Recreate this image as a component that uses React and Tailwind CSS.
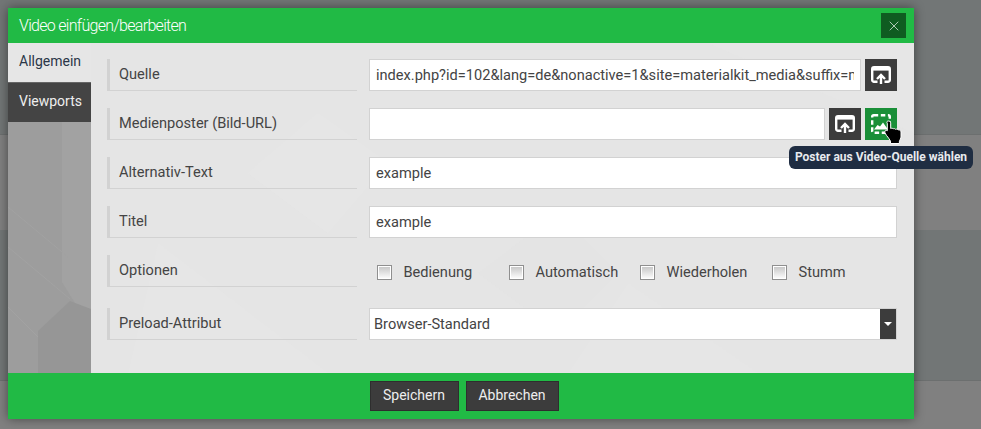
import { X } from 'lucide-react';

const fieldClass = 'flex-1 min-w-0 h-8 border border-[#d2d2d2] bg-white px-[6px] text-[14.6px] leading-[30px] text-[#444]';

function UploadIcon() {
  return (
    <svg width="20" height="18" viewBox="0 0 20 18" fill="none">
      <path d="M6.500 15.800H3a1.800 1.800 0 0 1-1.800-1.800V3A1.800 1.800 0 0 1 3 1.200h14A1.800 1.800 0 0 1 18.800 3v11a1.800 1.800 0 0 1-1.800 1.800h-3.500" stroke="#fff" strokeWidth="2.400" />
      <rect x="2" y="2" width="16" height="2.600" fill="#fff" />
      <path d="M10 18V9.500M6 13l4-4 4 4" stroke="#fff" strokeWidth="2.400" />
    </svg>
  );
}

function PosterIcon() {
  return (
    <svg width="20" height="20" viewBox="0 0 20 20" fill="none">
      <rect x="1.200" y="1.200" width="17.600" height="17.600" rx="1.500" stroke="#fff" strokeWidth="2.400" strokeDasharray="4.500 2.600" />
      <path d="M3 15.500 6.500 11l2.500 1.600L12 8.500l5 7z" fill="#fff" />
    </svg>
  );
}

function HandCursor() {
  return (
    <svg width="19" height="24" viewBox="0 0 19 24">
      <path
        d="M4.500 1c1.300 0 2.200 1 2.200 2.200v5.300c.8-.4 1.800-.3 2.400.3.800-.4 1.800-.2 2.400.5.800-.4 2-.2 2.500.6.900-.3 3 .2 3 2v4.300c0 2.300-1 3.600-1.600 5v2.300H6.500v-2.300C5.500 19 4 17.500 2.500 15.400L1 13c-1-1.700 1-3.500 2.300-2.300V3.200C2.300 2 3.200 1 4.500 1z"
        fill="#000"
        stroke="#fff"
        strokeWidth="1"
      />
    </svg>
  );
}

function Row({ label, className = 'mb-[17px]', children }) {
  return (
    <div className={`relative flex gap-3 ${className}`}>
      <div className="w-[250px] h-8 shrink-0 border-l-[3px] border-b border-[#d2d2d2] pl-[9px] text-[14.6px] leading-[31px] text-[#444]">
        {label}
      </div>
      <div className="flex-1 min-w-0 flex gap-1">{children}</div>
    </div>
  );
}

function IconButton({ green, children }) {
  return (
    <div className={`w-8 h-8 shrink-0 flex items-center justify-center ${green ? 'bg-[#1a8f38]' : 'bg-[#3c3c3c]'}`}>
      {children}
    </div>
  );
}

function Check({ label, className }) {
  return (
    <label className={`flex items-center ${className}`}>
      <span className="w-[15px] h-[15px] shrink-0 border border-[#8f8f8f] bg-gradient-to-b from-[#c4c4c4] to-white shadow-[inset_0_0_0_1px_#fff]" />
      <span className="ml-[11.500px] text-[14.6px] text-[#444]">{label}</span>
    </label>
  );
}

export default function App() {
  return (
    <div className="relative h-[429px] w-[981px] overflow-hidden bg-[#808080] font-['Roboto',sans-serif]">
      {/* page behind the overlay */}
      <div className="h-[135px] bg-[#727676] border-b border-[#6c6f6f]" />
      <div className="h-[95px]" />
      <div className="h-[151px] bg-[#727676] border-b border-[#6c6f6f]" />

      <div className="absolute left-2 top-2 w-[906px] h-[411px] flex flex-col bg-[#e5e5e5] shadow-[0_0_10px_rgba(0,0,0,0.45)]">
        <div className="h-[35px] shrink-0 flex items-center justify-between bg-[#21ba45] pl-[11px] pr-2">
          <span className="text-[16px] font-light tracking-[-0.7px] text-white">Video einfügen/bearbeiten</span>
          <div className="w-[25px] h-[25px] flex items-center justify-center bg-[#0f5c21]">
            <X size={16} strokeWidth={1} color="#fff" />
          </div>
        </div>

        <div className="relative flex-1 min-h-0 flex">
          {/* faint background pattern */}
          <svg className="absolute inset-0 w-full h-full" viewBox="0 0 906 330" preserveAspectRatio="none">
            <path d="M0 0h906v90L700 0z" fill="#e6e6e6" />
            <path d="M150 200l170 130H120zM620 240l130 90H560zM240 130l80 60 60-70-70-50z" fill="#e6e6e6" />
            <path d="M470 230l80-60 60 60-60 60z" fill="#e4e4e4" />
          </svg>

          {/* tabs */}
          <div className="relative w-[83px] shrink-0 flex flex-col bg-[#9d9d9d]">
            <div className="h-[39px] bg-[#e6e6e6] pl-[11px] text-[14px] leading-[36px] text-[#2b3648]">Allgemein</div>
            <div className="h-[40px] bg-[#444] border-t border-[#666] pl-[11px] text-[14px] leading-[37px] text-[#eee]">Viewports</div>
            <svg className="flex-1 w-full" viewBox="0 0 83 251" preserveAspectRatio="none">
              <path d="M54 0h29v207L54 160z" fill="#a2a2a2" />
              <path d="M83 187v64H30v-42l32-30z" fill="#969696" />
              <path d="M0 85l60 50M0 125l62 52M0 185l30 30" stroke="#a2a2a2" strokeWidth="1" fill="none" />
            </svg>
          </div>

          {/* form */}
          <div className="relative flex-1 min-w-0 pl-4 pr-[17px] pt-4">
            <Row label="Quelle">
              <div className={fieldClass}>
                <div className="overflow-hidden whitespace-nowrap">index.php?id=102&amp;lang=de&amp;nonactive=1&amp;site=materialkit_media&amp;suffix=mp4</div>
              </div>
              <IconButton><UploadIcon /></IconButton>
            </Row>
            <Row label="Medienposter (Bild-URL)">
              <div className={fieldClass} />
              <IconButton><UploadIcon /></IconButton>
              <IconButton green><PosterIcon /></IconButton>
            </Row>
            <Row label="Alternativ-Text"><div className={fieldClass}>example</div></Row>
            <Row label="Titel"><div className={fieldClass}>example</div></Row>
            <Row label="Optionen" className="mb-[21px]">
              <div className="flex-1 flex items-center pl-2 pt-[4px]">
                <Check label="Bedienung" className="w-[132px]" />
                <Check label="Automatisch" className="w-[131px]" />
                <Check label="Wiederholen" className="w-[132px]" />
                <Check label="Stumm" />
              </div>
            </Row>
            <Row label="Preload-Attribut" className="">
              <div className="flex-1 h-8 flex border border-[#d2d2d2] bg-white">
                <span className="flex-1 pl-1 text-[14.6px] leading-[30px] text-[#444]">Browser-Standard</span>
                <span className="w-4 flex items-center justify-center bg-[#3c3c3c]">
                  <span className="border-x-[4px] border-t-[4px] border-x-transparent border-t-white" />
                </span>
              </div>
            </Row>
          </div>
        </div>

        <div className="h-[46px] shrink-0 flex justify-center gap-[7px] bg-[#21ba45] pt-2 pl-[6px]">
          <div className="h-[30px] w-[89px] border border-[#2e2e2e] bg-[#3c3c3c] text-center text-[14px] leading-[27px] text-[#eee]">Speichern</div>
          <div className="h-[30px] w-[93px] border border-[#2e2e2e] bg-[#3c3c3c] text-center text-[14px] leading-[27px] text-[#eee]">Abbrechen</div>
        </div>
      </div>

      {/* hover state: cursor and tooltip */}
      <div className="absolute left-[884px] top-[120px]"><HandCursor /></div>
      <div className="absolute left-[789px] top-[146px] h-[23px] w-[184px] rounded-md bg-[#1f2d42] text-center text-[12px] font-bold leading-[23px] text-[#e8eaee]">
        Poster aus Video-Quelle wählen
      </div>
    </div>
  );
}
